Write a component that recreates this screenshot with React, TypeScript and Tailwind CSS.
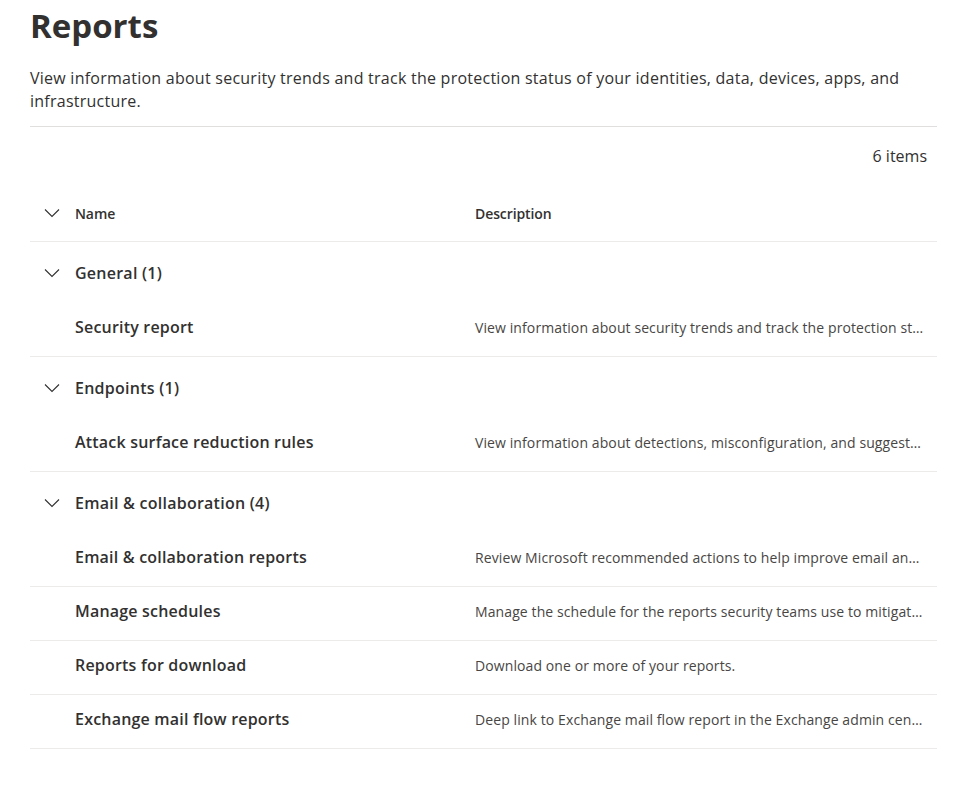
import React from "react";

const font = { fontFamily: '"Open Sans", "Noto Sans", Arial, sans-serif' };

function Chevron() {
  return (
    <svg width="16" height="10" viewBox="0 0 16 10" className="shrink-0">
      <path d="M1 1.5 L8 8.5 L15 1.5" fill="none" stroke="#323130" strokeWidth="1.1" />
    </svg>
  );
}

type Item = { name: string; desc: string };
const groups: { title: string; items: Item[] }[] = [
  {
    title: "General (1)",
    items: [
      {
        name: "Security report",
        desc: "View information about security trends and track the protection st…",
      },
    ],
  },
  {
    title: "Endpoints (1)",
    items: [
      {
        name: "Attack surface reduction rules",
        desc: "View information about detections, misconfiguration, and suggest…",
      },
    ],
  },
  {
    title: "Email & collaboration (4)",
    items: [
      {
        name: "Email & collaboration reports",
        desc: "Review Microsoft recommended actions to help improve email an…",
      },
      {
        name: "Manage schedules",
        desc: "Manage the schedule for the reports security teams use to mitigat…",
      },
      { name: "Reports for download", desc: "Download one or more of your reports." },
      {
        name: "Exchange mail flow reports",
        desc: "Deep link to Exchange mail flow report in the Exchange admin cen…",
      },
    ],
  },
];

export default function App() {
  return (
    <div className="w-[957px] h-[787px] bg-white text-[#323130] pl-[30px] pr-[20px]" style={font}>
      <h1 className="text-[33px] font-bold leading-[40px] pt-[6px]">Reports</h1>
      <p className="mt-[21px] text-[16px] leading-[23px] text-[#323130] tracking-[0.25px] pr-[20px]">
        View information about security trends and track the protection status of your identities, data, devices,
        apps, and infrastructure.
      </p>
      <div className="mt-[13px] border-t border-[#e1dfdd]" />
      <div className="h-[58px] flex items-center justify-end pr-[10px] text-[16px]">6 items</div>
      <div className="h-[57px] flex items-center border-b border-[#edebe9] text-[14px] tracking-[-0.1px]">
        <div className="w-[445px] flex items-center">
          <div className="w-[45px] pl-[14px] flex items-center">
            <Chevron />
          </div>
          <span className="font-semibold">Name</span>
        </div>
        <div className="font-semibold">Description</div>
      </div>
      {groups.map((g) => (
        <div key={g.title}>
          <div className="h-[61px] pt-[1px] flex items-center text-[16px] font-semibold tracking-[0.25px]">
            <div className="w-[45px] pl-[14px] flex items-center">
              <Chevron />
            </div>
            <span>{g.title}</span>
          </div>
          {g.items.map((it) => (
            <div key={it.name} className="h-[54px] flex items-center border-b border-[#edebe9] pb-[5px]">
              <div className="w-[445px] pl-[45px] text-[16px] font-semibold tracking-[0.2px]">{it.name}</div>
              <div className="flex-1 min-w-0 pr-[10px] text-[14px] text-[#484644] tracking-[0.1px] whitespace-nowrap">
                {it.desc}
              </div>
            </div>
          ))}
        </div>
      ))}
    </div>
  );
}
